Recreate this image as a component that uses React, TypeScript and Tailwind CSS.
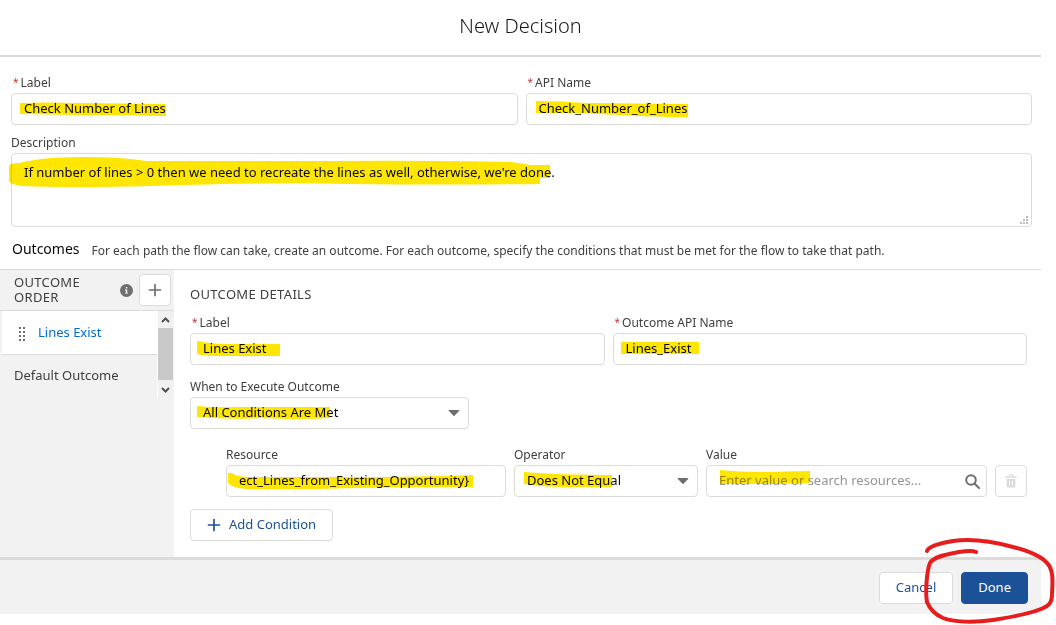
import type { ReactNode } from 'react';

const control =
  'block w-full rounded border border-[#dddbda] bg-white px-3 text-[13px] text-[#080707] outline-none focus:border-[#1589ee]';

function Label({ id, required, children }: { id: string; required?: boolean; children: ReactNode }) {
  return (
    <label htmlFor={id} className="mb-px flex h-[19px] items-center text-xs text-[#3e3e3c]">
      {required && <span className="mx-0.5 text-[10px] text-[#c23934]">*</span>}
      {children}
    </label>
  );
}

/* Marker stroke laid over a field; coordinates start at the field's top left corner. */
function Marker({ d }: { d: string }) {
  return (
    <svg
      className="pointer-events-none absolute top-0 left-0 overflow-visible mix-blend-multiply"
      width="1"
      height="1"
      aria-hidden="true"
    >
      <path d={d} fill="#ffe600" />
    </svg>
  );
}

type FieldProps = {
  id: string;
  label: string;
  value?: string;
  placeholder?: string;
  required?: boolean;
  marker: string;
  children?: ReactNode;
};

function TextField({ id, label, value, placeholder, required, marker, children }: FieldProps) {
  return (
    <div className="min-w-0">
      <Label id={id} required={required}>{label}</Label>
      <div className="relative">
        <input
          id={id}
          type="text"
          defaultValue={value}
          placeholder={placeholder}
          className={`${control} h-8 pb-0.5 placeholder:text-[#969492]`}
        />
        <Marker d={marker} />
        {children}
      </div>
    </div>
  );
}

function SelectField({ id, label, options, marker }: { id: string; label: string; options: string[]; marker: string }) {
  return (
    <div className="min-w-0">
      <Label id={id}>{label}</Label>
      <div className="relative">
        <select id={id} className={`${control} h-8 appearance-none`}>
          {options.map((option) => (
            <option key={option}>{option}</option>
          ))}
        </select>
        <svg className="pointer-events-none absolute top-3 right-[9px]" width="12" height="8" viewBox="0 0 12 8" aria-hidden="true">
          <path d="M1.4 1h9.2c.6 0 .9.6.5 1L6.5 6.8a.7.7 0 0 1-1 0L.9 2c-.4-.4-.1-1 .5-1z" fill="#706e6b" />
        </svg>
        <Marker d={marker} />
      </div>
    </div>
  );
}

function Plus({ color }: { color: string }) {
  return (
    <svg width="14" height="14" viewBox="0 0 14 14" fill="none" stroke={color} strokeWidth="1.700" strokeLinecap="round" aria-hidden="true">
      <path d="M7 1.500v11M1.500 7h11" />
    </svg>
  );
}

export default function App() {
  return (
    <div className="overflow-hidden bg-white pb-[11px] font-['Noto_Sans',sans-serif] text-[13px] text-[#3e3e3c]">
      <main className="mr-[15px]">
        <header className="border-b-2 border-[#dddbda] pt-[11px] pb-3.5">
          <h1 className="text-center text-xl leading-[30px] font-light text-[#181716]">New Decision</h1>
        </header>

        <section className="pt-4 pr-[9px] pl-[11px]">
          <div className="grid grid-cols-2 gap-2">
            <TextField
              id="label"
              label="Label"
              required
              value="Check Number of Lines"
              marker="M9 10Q35 9 65 10L155 11V23Q110 22 70 22L9 21Z"
            />
            <TextField
              id="api-name"
              label="API Name"
              required
              value="Check_Number_of_Lines"
              marker="M10 8Q35 8 60 10L162 11V24Q130 24 95 22L50 20L10 20Z"
            />
          </div>
          <div className="mt-2">
            <Label id="description">Description</Label>
            <div className="relative">
              <textarea
                id="description"
                className={`${control} h-[74px] resize-none py-2 leading-5`}
                defaultValue="If number of lines > 0 then we need to recreate the lines as well, otherwise, we're done."
              />
              <svg className="pointer-events-none absolute right-1 bottom-[3px]" width="8" height="8" fill="#bebdbc" aria-hidden="true">
                <path d="M6 0h2v2H6zM3 3h2v2H3zM6 3h2v2H6zM0 6h2v2H0zM3 6h2v2H3zM6 6h2v2H6z" />
              </svg>
              <Marker d="M-2 13Q-1 10 8 10Q32 4 70 4Q110 4 135 8L300 8Q420 7 500 9L520 12H539V25H529V31Q440 32 340 31Q260 29 140 33Q60 35 10 33Q-1 31 -2 28Z" />
            </div>
          </div>
          <div className="flex h-[42px] items-center gap-3 pt-0.5 pl-px">
            <h2 className="text-sm text-[#080707]">Outcomes</h2>
            <p className="pt-1 text-xs">
              For each path the flow can take, create an outcome. For each outcome, specify the conditions that must be met for the flow to take that path.
            </p>
          </div>
        </section>

        <div className="flex border-t border-[#dddbda]">
          <aside className="w-[174px] shrink-0 bg-[#f3f2f2]">
            <div className="flex h-[41px] items-center border-b border-[#dddbda] pr-[3px] pl-3.5">
              <h3 className="flex-1 pr-4 text-[13px] leading-[15px] tracking-wide">OUTCOME ORDER</h3>
              <svg width="13" height="13" viewBox="0 0 13 13" className="mr-1.5 shrink-0" aria-hidden="true">
                <circle cx="6.5" cy="6.5" r="6.5" fill="#706e6b" />
                <path d="M5.8 3h1.5v1.5H5.8zM5 5.6h2.2v3.1H8v.9H5v-.9h.8V6.5H5z" fill="#fff" />
              </svg>
              <button type="button" aria-label="Add outcome" className="flex size-8 shrink-0 items-center justify-center rounded border border-[#dddbda] bg-white">
                <Plus color="#706e6b" />
              </button>
            </div>
            <div className="flex">
              <ul className="ml-0.5 flex-1">
                <li className="border-b border-[#dddbda] bg-white">
                  <button type="button" className="flex h-[43px] w-full items-center gap-3 pl-[17px] text-[#006dcc]">
                    <svg width="7" height="14" fill="#706e6b" className="mt-0.5" aria-hidden="true">
                      <path d="M0 0h2v2H0zM4 0h2v2H4zM0 4h2v2H0zM4 4h2v2H4zM0 8h2v2H0zM4 8h2v2H4zM0 12h2v2H0zM4 12h2v2H4z" />
                    </svg>
                    Lines Exist
                  </button>
                </li>
                <li>
                  <button type="button" className="flex h-[43px] w-full items-center pb-0.5 pl-3">Default Outcome</button>
                </li>
              </ul>
              <div className="mr-px flex w-4 flex-col items-center border-l border-white bg-[#f1f1f1]" aria-hidden="true">
                <svg width="15" height="17" fill="none" stroke="#505050" strokeWidth="2">
                  <path d="M4 11l3.500-3.500L11 11" />
                </svg>
                <div className="w-full flex-1 bg-[#c9c9c9]" />
                <svg width="15" height="18" fill="none" stroke="#505050" strokeWidth="2">
                  <path d="M4 8l3.500 3.500L11 8" />
                </svg>
              </div>
            </div>
          </aside>

          <section className="min-w-0 flex-1 pt-3.5 pr-3.5 pb-4 pl-4">
            <h3 className="mb-[9px] text-[13px] leading-5 tracking-wide">OUTCOME DETAILS</h3>
            <div className="grid grid-cols-2 gap-2">
              <TextField
                id="outcome-label"
                label="Label"
                required
                value="Lines Exist"
                marker="M7 8Q18 10 30 11H90V23H30Q14 23 7 21Z"
              />
              <TextField
                id="outcome-api-name"
                label="Outcome API Name"
                required
                value="Lines_Exist"
                marker="M8 9H86V21H8Z"
              />
            </div>
            <div className="mt-3 w-1/3">
              <SelectField
                id="execute-when"
                label="When to Execute Outcome"
                options={['All Conditions Are Met', 'Any Condition Is Met', 'Custom Condition Logic Is Met']}
                marker="M7 9Q24 11 45 10H140V21Q110 23 70 21Q40 23 7 20Z"
              />
            </div>
            <div className="mt-4 grid grid-cols-[280fr_184fr_281fr_32px] items-end gap-2 pl-9">
              <TextField
                id="resource"
                label="Resource"
                value="ect_Lines_from_Existing_Opportunity}"
                marker="M2 8H6Q10 12 25 12H130Q190 12 247 10V22Q190 22 130 23Q70 25 20 24Q4 22 2 18Z"
              />
              <SelectField
                id="operator"
                label="Operator"
                options={['Does Not Equal', 'Equals', 'Is Null']}
                marker="M10 7Q45 10 98 10V22H50Q28 22 10 19Z"
              />
              <TextField
                id="value"
                label="Value"
                placeholder="Enter value or search resources..."
                marker="M14 5Q30 7 60 7L104 6V18Q80 19 55 19H14Z"
              >
                <svg className="pointer-events-none absolute top-[9px] right-1.5" width="16" height="16" fill="none" stroke="#706e6b" strokeWidth="2" strokeLinecap="round" aria-hidden="true">
                  <circle cx="6" cy="6" r="4.800" />
                  <path d="M9.700 9.700l4.300 4.300" />
                </svg>
              </TextField>
              <button type="button" disabled aria-label="Delete condition" className="flex size-8 items-center justify-center rounded border border-[#dddbda] bg-white">
                <svg width="12" height="14" viewBox="0 0 12 14" aria-hidden="true">
                  <path d="M4.300 2V1.300Q4.300.7 5 .7h2q.7 0 .7.600V2" fill="none" stroke="#dddbda" strokeWidth="1.200" />
                  <path d="M.8 2.200h10.400q.6 0 .6.600v.5q0 .5-.6.500H.8q-.6 0-.6-.5v-.5q0-.6.600-.6z" fill="#dddbda" />
                  <path fillRule="evenodd" d="M1.600 5h8.800v7.200q0 1.300-1.300 1.300H2.900q-1.300 0-1.300-1.300zM4 6.800v4.400h1.100V6.800zM6.900 6.800v4.400H8V6.800z" fill="#dddbda" />
                </svg>
              </button>
            </div>
            <button type="button" className="mt-3 flex h-8 items-center gap-2 rounded border border-[#dddbda] bg-white px-4 text-[#1b5297]">
              <Plus color="#1b5297" />
              Add Condition
            </button>
          </section>
        </div>

        <footer className="flex justify-end gap-2 border-t-[3px] border-[#dddbda] bg-[#f3f2f2] pt-3 pr-[13px] pb-2.5">
          <button type="button" className="h-8 rounded border border-[#dddbda] bg-white px-4 text-[#1b5297]">Cancel</button>
          <div className="relative">
            <button type="button" className="h-8 rounded border border-[#1b5297] bg-[#1b5297] px-4 text-white">Done</button>
            <svg
              className="pointer-events-none absolute top-0 left-0 overflow-visible"
              width="1"
              height="1"
              fill="none"
              stroke="#e71d1d"
              strokeWidth="4"
              strokeLinecap="round"
              strokeLinejoin="round"
              aria-hidden="true"
            >
              <path d="M-34 -21C-32 -26 -20 -29 -8 -31C12 -34 34 -30 52 -25C68 -21 80 -16 86 -9C92 -3 92 7 91 22C91 32 87 34 80 37C68 42 51 45 32 48C12 51 -8 50 -18 46C-27 42 -32 35 -34 30C-36 20 -34 -2 -31 -9C-27 -16 -12 -18 -2 -20C5 -21 13 -21 15 -20" />
            </svg>
          </div>
        </footer>
      </main>
    </div>
  );
}
